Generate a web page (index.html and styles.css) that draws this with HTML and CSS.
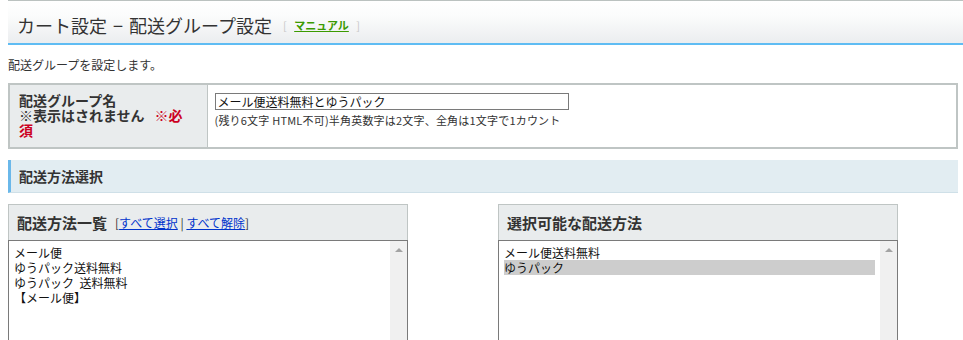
FILE: index.html
```html
<!DOCTYPE html>
<html lang="ja">
<head>
  <meta charset="UTF-8" />
  <title>配送グループ設定</title>
  <link rel="stylesheet" href="styles.css">
</head>
<body>
  <div class="page-head">
    <h1>カート設定 − 配送グループ設定</h1>
    <span class="manual">[ <a href="#">マニュアル</a> ]</span>
  </div>

  <div class="content">
    <p class="lead">配送グループを設定します。</p>

    <table class="form-table">
      <tr>
        <th>配送グループ名<br>※表示はされません<span class="req">※必須</span></th>
        <td>
          <input type="text" class="name-input" value="メール便送料無料とゆうパック">
          <div class="hint">(残り6文字 HTML不可)半角英数字は2文字、全角は1文字で1カウント</div>
        </td>
      </tr>
    </table>

    <h2 class="section-bar">配送方法選択</h2>

    <div class="pickers">
      <div class="picker">
        <div class="picker-head">
          配送方法一覧
          <span class="links">[<a href="#">すべて選択</a> | <a href="#">すべて解除</a>]</span>
        </div>
        <div class="listbox">
          <ul class="options">
            <li>メール便</li>
            <li>ゆうパック送料無料</li>
            <li>ゆうパック&nbsp;&nbsp;送料無料</li>
            <li>【メール便】</li>
          </ul>
          <div class="scroll"><span class="arrow"></span></div>
        </div>
      </div>

      <div class="picker">
        <div class="picker-head">選択可能な配送方法</div>
        <div class="listbox">
          <ul class="options">
            <li>メール便送料無料</li>
            <li class="selected">ゆうパック</li>
          </ul>
          <div class="scroll"><span class="arrow"></span></div>
        </div>
      </div>
    </div>
  </div>
</body>
</html>
```

FILE: styles.css
```css
* { box-sizing: border-box; }

body {
  margin: 0;
  padding-left: 8px;
  font-family: "Noto Sans CJK JP", "DejaVu Sans", sans-serif;
  font-size: 12px;
  color: #333;
  background: #fff;
  overflow: hidden;
}

.page-head {
  height: 45px;
  border-top: 1px solid #bbc2c0;
  border-bottom: 2px solid #5fbcf3;
  background: linear-gradient(to bottom, #fff 0%, #fbfcfc 35%, #ebedef 100%);
  display: flex;
  align-items: center;
  padding: 6px 0 0 9px;
}

.page-head h1 {
  margin: 0;
  font-size: 18px;
  font-weight: normal;
  color: #333;
  line-height: 24px;
  word-spacing: 2px;
}

.manual {
  margin-left: 11px;
  font-size: 11px;
  color: #c8c8c8;
  word-spacing: 5px;
}

.manual a {
  color: #3b9a00;
  font-weight: bold;
  word-spacing: 0;
}

.content {
  width: 950px;
}

.lead {
  margin: 12px 0 10px;
  line-height: 16px;
}

.form-table {
  width: 100%;
  border-collapse: collapse;
  border: 2px solid #bfc5c4;
}

.form-table th {
  width: 198px;
  background: #e9eced;
  border-right: 1px solid #bfc5c4;
  text-align: left;
  vertical-align: top;
  font-size: 14px;
  line-height: 15px;
  padding: 8px 18px 9px 9px;
  color: #333;
}

.req {
  color: #cc0022;
  margin-left: 10px;
}

.form-table td {
  vertical-align: top;
  padding: 8px 7px;
}

.name-input {
  display: block;
  width: 354px;
  height: 17px;
  padding: 0 2px;
  border: 1px solid #7a7a7a;
  font-family: inherit;
  font-size: 12px;
  color: #111;
  outline: none;
}

.hint {
  margin-top: 3px;
  font-size: 11px;
  line-height: 14px;
  letter-spacing: 0.2px;
}

.section-bar {
  margin: 11px 0 11px;
  height: 33px;
  background: #e2edf2;
  border-left: 3px solid #6ab8ea;
  border-bottom: 1px solid #cfe0e8;
  font-size: 14px;
  line-height: 32px;
  padding-left: 8px;
  color: #333;
}

.pickers {
  display: flex;
  gap: 90px;
}

.picker {
  width: 400px;
}

.picker-head {
  height: 36px;
  background: #e9eced;
  border: 1px solid #bfc5c4;
  border-bottom: none;
  padding: 0 8px;
  display: flex;
  align-items: center;
  font-size: 15px;
  font-weight: bold;
}

.links {
  margin-left: 8px;
  font-size: 12px;
  font-weight: normal;
}

.links a {
  color: #0033cc;
}

.listbox {
  display: flex;
  height: 140px;
  border: 1px solid #7a7a7a;
}

.options {
  flex: 1;
  list-style: none;
  margin: 0;
  padding: 4px 5px 0 5px;
  font-size: 12px;
  line-height: 15px;
  color: #111;
}

.options li {
  height: 15px;
  white-space: pre;
}

.options li.selected {
  background: #cdcdcd;
}

.scroll {
  width: 17px;
  background: #f0f0f0;
  display: flex;
  justify-content: center;
  padding-top: 7px;
}

.arrow {
  width: 0;
  height: 0;
  border-left: 4px solid transparent;
  border-right: 4px solid transparent;
  border-bottom: 4px solid #a3a3a3;
}
```
